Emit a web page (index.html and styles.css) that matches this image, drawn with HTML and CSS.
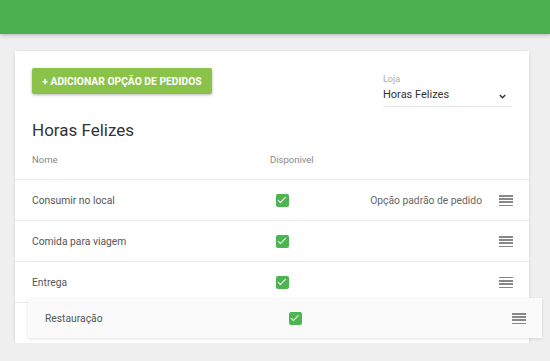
FILE: index.html
```html
<!DOCTYPE html>
<html lang="pt">
<head>
    <meta charset="UTF-8">
    <meta name="viewport" content="width=device-width, initial-scale=1.0">
    <title>Opções de pedido</title>
    <link rel="stylesheet" href="styles.css">
</head>
<body>
    <!-- Top bar -->
    <header class="top-bar"></header>

    <div class="card">
        <!-- Toolbar: add button + store select -->
        <div class="card-toolbar">
            <button class="add-button">+ Adicionar opção de pedidos</button>

            <div class="store-select">
                <div class="store-label">Loja</div>
                <div class="store-value">
                    <span>Horas Felizes</span>
                    <svg class="chevron" width="7" height="5" viewBox="0 0 7 5">
                        <polyline points="0.8,1 3.5,3.8 6.2,1" fill="none" stroke="#333" stroke-width="1.4"/>
                    </svg>
                </div>
            </div>
        </div>

        <h2 class="store-title">Horas Felizes</h2>

        <!-- Order options list -->
        <div class="options">
            <div class="option-row header-row">
                <div class="col-name">Nome</div>
                <div class="col-available">Disponivel</div>
            </div>

            <div class="option-row">
                <div class="col-name">Consumir no local</div>
                <div class="col-available"><span class="checkbox"></span></div>
                <div class="col-default">Opção padrão de pedido</div>
                <div class="col-handle"><span class="handle"></span></div>
            </div>

            <div class="option-row">
                <div class="col-name">Comida para viagem</div>
                <div class="col-available"><span class="checkbox"></span></div>
                <div class="col-default"></div>
                <div class="col-handle"><span class="handle"></span></div>
            </div>

            <div class="option-row">
                <div class="col-name">Entrega</div>
                <div class="col-available"><span class="checkbox"></span></div>
                <div class="col-default"></div>
                <div class="col-handle"><span class="handle"></span></div>
            </div>

            <!-- Row currently being dragged -->
            <div class="option-row dragging">
                <div class="col-name">Restauração</div>
                <div class="col-available"><span class="checkbox"></span></div>
                <div class="col-default"></div>
                <div class="col-handle"><span class="handle"></span></div>
            </div>
        </div>
    </div>
</body>
</html>
```

FILE: styles.css
```css
body {
    margin: 0;
    font-family: 'Roboto', 'Liberation Sans', sans-serif;
    background-color: #efefef;
    color: #555;
}

.top-bar {
    height: 34px;
    background-color: #4caf50;
    box-shadow: 0 1px 4px rgba(0, 0, 0, 0.25);
}

.card {
    width: 514px;
    margin: 17px 0 0 15px;
    background-color: #fff;
    box-shadow: 0 1px 3px rgba(0, 0, 0, 0.12);
}

.card-toolbar {
    display: flex;
    justify-content: space-between;
    align-items: flex-start;
    padding: 17px 17px 0 17px;
}

.add-button {
    height: 26px;
    width: 180px;
    padding: 0;
    border: none;
    border-radius: 2px;
    background-color: #8bc34a;
    color: #fff;
    font-family: inherit;
    font-size: 10.3px;
    font-weight: 700;
    text-transform: uppercase;
    box-shadow: 0 1px 3px rgba(0, 0, 0, 0.3);
    cursor: pointer;
}

.store-select {
    width: 129px;
    margin-top: 5px;
}

.store-label {
    font-size: 9px;
    line-height: 12px;
    color: #aaa;
}

.store-value {
    display: flex;
    justify-content: space-between;
    align-items: center;
    margin-top: 2px;
    padding-bottom: 3px;
    font-size: 11px;
    line-height: 16px;
    color: #333;
    border-bottom: 1px solid #e6e6e6;
}

.chevron {
    margin: 3px 6px 0 0;
}

.store-title {
    margin: 13px 0 0 0;
    padding-left: 17px;
    font-size: 17px;
    font-weight: 400;
    line-height: 20px;
    color: #333;
}

.option-row {
    display: flex;
    align-items: center;
    height: 40px;
    padding: 0 16px 0 17px;
    border-bottom: 1px solid #ececec;
    font-size: 10.3px;
    color: #555;
}

.option-row:last-child {
    border-bottom: none;
}

.header-row {
    height: 39px;
    font-size: 9.5px;
    color: #888;
}

.col-name {
    width: 238px;
}

.col-available {
    width: 60px;
}

.col-default {
    flex: 1;
    text-align: right;
    color: #666;
}

.col-handle {
    width: 14px;
    margin-left: 17px;
}

.checkbox {
    display: block;
    position: relative;
    width: 13px;
    height: 13px;
    margin-left: 6px;
    border-radius: 2px;
    background-color: #4cb450;
}

.checkbox::after {
    content: '';
    position: absolute;
    left: 4px;
    top: 1.5px;
    width: 3px;
    height: 6.5px;
    border: solid #fff;
    border-width: 0 1.5px 1.5px 0;
    transform: rotate(45deg);
}

.handle {
    display: block;
    width: 14px;
    height: 11px;
    background: repeating-linear-gradient(to bottom, #888 0, #888 1.5px, transparent 1.5px, transparent 3.2px);
}

.dragging {
    background-color: #fafafa;
    transform: translate(13px, -5px);
    box-shadow: 0 1px 3px rgba(0, 0, 0, 0.12);
}
```
